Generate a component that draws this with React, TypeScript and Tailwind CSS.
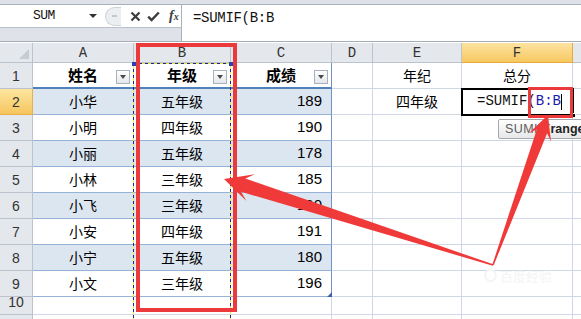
import React from 'react';

// column widths: row header, A..F, G (rest)
const COLS = ['w-[33px]', 'w-[101px]', 'w-[97px]', 'w-[101px]', 'w-[41px]', 'w-[89px]', 'w-[111px]', 'flex-1'];

const students = [
  ['小华', '五年级', '189'],
  ['小明', '四年级', '190'],
  ['小丽', '五年级', '178'],
  ['小林', '三年级', '185'],
  ['小飞', '三年级', '190'],
  ['小安', '四年级', '191'],
  ['小宁', '五年级', '180'],
  ['小文', '三年级', '196'],
];

const cjk = "font-['Noto_Sans_CJK_SC',sans-serif]";
const mono = "font-['Liberation_Mono',monospace]";
const sans = "font-['Liberation_Sans',sans-serif]";

// tapered arrow like the ones drawn on screenshots
function arrowPoints(tip: [number, number], tail: [number, number], headLen: number, headHalf: number, neckHalf: number) {
  const dx = tail[0] - tip[0];
  const dy = tail[1] - tip[1];
  const len = Math.hypot(dx, dy);
  const ux = dx / len;
  const uy = dy / len;
  const nx = -uy;
  const ny = ux;
  const p = (a: number, b: number) => `${(tip[0] + ux * a + nx * b).toFixed(1)},${(tip[1] + uy * a + ny * b).toFixed(1)}`;
  return [
    p(0, 0),
    p(headLen, headHalf),
    p(headLen * 0.72, neckHalf),
    p(len, 0.7),
    p(len, -0.7),
    p(headLen * 0.72, -neckHalf),
    p(headLen, -headHalf),
  ].join(' ');
}

function FilterBtn() {
  return (
    <div className="absolute right-[3px] bottom-[3px] w-[14px] h-[14px] flex items-center justify-center border border-[#a8b2be] bg-linear-to-b from-white to-[#e3e7ec]">
      <div className="w-0 h-0 border-l-[3px] border-r-[3px] border-t-[4px] border-l-transparent border-r-transparent border-t-[#4a4a4a]" />
    </div>
  );
}

function RowHead({ n, active = false, h = 'h-[26px]' }: { n: string; active?: boolean; h?: string }) {
  return (
    <div
      className={`${COLS[0]} ${h} shrink-0 flex items-end justify-center pb-[1px] border-r border-b text-[14px] text-[#333] ${sans} ${
        active ? 'bg-linear-to-b from-[#fde6a0] to-[#f5c55c] border-[#e9b04a]' : 'bg-[#e4e7ec] border-[#bcc3cc]'
      }`}
    >
      {n}
    </div>
  );
}

export default function App() {
  return (
    <div className="relative w-[581px] h-[319px] overflow-hidden bg-white select-none">
      {/* 수식 입력줄 */}
      <div className="h-[5px] bg-[#dfe3e9] border-b border-[#a9b1bb]" />
      <div className="flex h-[36px]">
        <div className="w-[182px] shrink-0 flex flex-col border-r border-[#a9b1bb]">
          <div className="h-[23px] flex items-center bg-white border-b border-[#b9c0c9]">
            <div className="w-[100px] h-full flex items-center">
              <span className={`pl-[33px] text-[13px] tracking-[-0.5px] text-[#111] ${mono}`}>SUM</span>
              <div className="ml-auto mr-[3px] w-0 h-0 border-l-[4px] border-r-[4px] border-t-[4px] border-l-transparent border-r-transparent border-t-[#333]" />
            </div>
            <div className="ml-[5px] w-[16px] h-[19px] rounded-l-full bg-[#eceef1] border border-r-0 border-[#cfd4da] flex items-center justify-center">
              <div className="w-[5px] h-[2px] bg-[#c3c8cf] ml-[2px]" />
            </div>
            <svg className="ml-[9px]" width="11" height="11" viewBox="0 0 11 11">
              <path d="M1.5 1.5 L9.5 9.5 M9.5 1.5 L1.5 9.5" stroke="#3d3d3d" strokeWidth="2.2" />
            </svg>
            <svg className="ml-[6px]" width="13" height="11" viewBox="0 0 13 11">
              <path d="M1.2 5.6 L4.6 9 L11.8 1.5" stroke="#3d3d3d" strokeWidth="2.4" fill="none" />
            </svg>
            <span className="ml-[9px] text-[14px] italic font-bold text-[#3d3d3d] font-['Liberation_Serif',serif] leading-none">
              f<span className="text-[10px]">x</span>
            </span>
          </div>
          <div className="flex-1 bg-[#dfe3e9]" />
        </div>
        <div className={`flex-1 bg-white pl-[11px] pt-[3px] text-[14px] tracking-[-0.3px] text-[#111] ${mono}`}>=SUMIF(B:B</div>
      </div>
      <div className="h-[2px] border-t border-[#a4acb6] bg-white" />

      {/* 열 머리글 */}
      <div className="flex h-[20px]">
        <div className={`${COLS[0]} shrink-0 flex items-end justify-end p-[3px] bg-[#e4e7ec] border-r border-b border-[#bcc3cc]`}>
          <div className="w-0 h-0 border-l-[10px] border-l-transparent border-b-[10px] border-b-[#c6cbd2]" />
        </div>
        {['A', 'B', 'C', 'D', 'E'].map((c, i) => (
          <div
            key={c}
            className={`${COLS[i + 1]} shrink-0 flex items-end justify-center border-r border-b border-[#bcc3cc] bg-[#e4e7ec] text-[14px] text-[#333] leading-[17px] ${mono}`}
          >
            {c}
          </div>
        ))}
        <div className={`${COLS[6]} shrink-0 flex items-end justify-center border-r border-b border-[#e9a941] bg-linear-to-b from-[#fde3a0] to-[#f7c85f] text-[14px] text-[#333] leading-[17px] ${mono}`}>
          F
        </div>
        <div className="flex-1 bg-[#e4e7ec] border-b border-[#bcc3cc]" />
      </div>

      {/* 1행 */}
      <div className={`flex h-[26px] ${cjk}`}>
        <RowHead n="1" />
        <div className={`${COLS[1]} shrink-0 relative flex items-center justify-center border-b-2 border-b-[#4f81bd] border-r border-r-[#d0d7e5] text-[15px] font-bold`}>
          姓名
          <FilterBtn />
        </div>
        <div className={`${COLS[2]} shrink-0 relative flex items-center justify-center border-b-2 border-b-[#4f81bd] border-r border-r-[#d0d7e5] text-[15px] font-bold`}>
          年级
          <FilterBtn />
        </div>
        <div className={`${COLS[3]} shrink-0 relative flex items-center justify-center border-b-2 border-b-[#4f81bd] border-r border-r-[#7391c4] text-[15px] font-bold`}>
          成绩
          <FilterBtn />
        </div>
        <div className={`${COLS[4]} shrink-0 border-r border-b border-[#d0d7e5]`} />
        <div className={`${COLS[5]} shrink-0 flex items-center justify-center border-r border-b border-[#d0d7e5] text-[14px]`}>年纪</div>
        <div className={`${COLS[6]} shrink-0 flex items-center justify-center border-r border-b border-[#d0d7e5] text-[14px]`}>总分</div>
        <div className="flex-1 border-b border-[#d0d7e5]" />
      </div>

      {/* 2~9행 */}
      {students.map(([name, grade, score], i) => {
        const band = i % 2 === 0;
        const fill = band ? 'bg-[#dce6f1] border-r-[#dce6f1]' : 'bg-white border-r-[#d0d7e5]';
        return (
          <div key={name} className={`flex h-[26px] ${cjk}`}>
            <RowHead n={String(i + 2)} active={i === 0} />
            <div className={`${COLS[1]} shrink-0 flex items-center justify-center border-r border-b border-b-[#95b3d7] ${fill} text-[14px]`}>{name}</div>
            <div className={`${COLS[2]} shrink-0 flex items-center justify-center border-r border-b border-b-[#95b3d7] ${fill} text-[14px]`}>{grade}</div>
            <div
              className={`${COLS[3]} shrink-0 flex items-center justify-end pr-[9px] border-r border-r-[#7391c4] border-b border-b-[#95b3d7] ${
                band ? 'bg-[#dce6f1]' : 'bg-white'
              } text-[15px] ${sans}`}
            >
              {score}
            </div>
            <div className={`${COLS[4]} shrink-0 border-r border-b border-[#d0d7e5]`} />
            <div className={`${COLS[5]} shrink-0 flex items-center justify-center border-r border-b border-[#d0d7e5] text-[14px]`}>
              {i === 0 ? '四年级' : ''}
            </div>
            <div className={`${COLS[6]} shrink-0 flex items-center pl-[15px] border-r border-b border-[#d0d7e5] text-[14px] ${mono}`}>
              {i === 0 && (
                <>
                  <span className="text-[#111]">=SUMIF(</span>
                  <span className="text-[#1a1ab0]">B:B</span>
                  <span className="w-[1px] h-[16px] bg-black" />
                </>
              )}
            </div>
            <div className="flex-1 border-b border-[#d0d7e5]" />
          </div>
        );
      })}

      {/* 10, 11행 */}
      <div className="flex h-[18px]">
        <RowHead n="10" h="h-[18px]" />
        {[1, 2, 3, 4, 5, 6].map((c) => (
          <div key={c} className={`${COLS[c]} shrink-0 border-r border-b border-[#d0d7e5]`} />
        ))}
        <div className="flex-1 border-b border-[#d0d7e5]" />
      </div>
      <div className="flex h-[10px]">
        <RowHead n="" h="h-[10px]" />
        {[1, 2, 3, 4, 5, 6].map((c) => (
          <div key={c} className={`${COLS[c]} shrink-0 border-r border-[#d0d7e5]`} />
        ))}
      </div>

      {/* 표 크기 조절 핸들 */}
      <div className="absolute left-[327px] top-[292px] w-0 h-0 border-l-[5px] border-l-transparent border-b-[5px] border-b-[#3f5fa8]" />

      {/* B열 복사 범위 점선 */}
      <div className="absolute left-[133px] top-[63px] w-[99px] h-[1px] bg-[repeating-linear-gradient(to_right,#1b2a86_0_3px,#efe64a_3px_6px)]" />
      <div className="absolute left-[133px] top-[63px] w-[1px] h-[260px] bg-[repeating-linear-gradient(to_bottom,#1b2a86_0_3px,#efe64a_3px_6px)]" />
      <div className="absolute left-[230px] top-[63px] w-[1px] h-[260px] bg-[repeating-linear-gradient(to_bottom,#1b2a86_0_3px,#efe64a_3px_6px)]" />
      <div className="absolute left-[132px] top-[62px] w-[4px] h-[4px] bg-[#2342b5]" />
      <div className="absolute left-[229px] top-[62px] w-[4px] h-[4px] bg-[#2342b5]" />

      {/* 선택된 셀 F2 */}
      <div className="absolute left-[461px] top-[88px] w-[113px] h-[28px] border-2 border-black" />
      <div className="absolute left-[571px] top-[113px] w-[5px] h-[5px] bg-black border border-white" />

      {/* 함수 도움말 */}
      <div className={`absolute left-[498px] top-[119px] h-[20px] flex items-center pl-[6px] pr-[6px] whitespace-nowrap rounded-[2px] border border-[#a5a9ae] bg-linear-to-b from-white to-[#e6e7e9] text-[12.5px] tracking-[0.4px] text-[#5c5c5c] ${sans}`}>
        SUMIF(<b className="text-[#222] tracking-normal">range</b>, criteria, [sum_range])
      </div>

      {/* 희미한 워터마크 */}
      <div className={`absolute left-[484px] top-[266px] flex items-center gap-[3px] text-[13px] text-[#f4f4f4] ${cjk}`}>
        <div className="w-[13px] h-[13px] rounded-full border-2 border-[#f4f4f4]" />
        百度经验
      </div>

      {/* 빨간 강조 상자 */}
      <div className="absolute left-[136px] top-[43px] w-[101px] h-[269px] border-4 border-[#ec3a3c]" />
      <div className="absolute left-[528px] top-[87px] w-[45px] h-[31px] border-[3px] border-[#ec3a3c]" />

      {/* 빨간 화살표 */}
      <svg className="absolute left-0 top-0" width="581" height="319" viewBox="0 0 581 319">
        <polygon points={arrowPoints([224, 179], [493, 265], 28, 14, 7)} fill="#f03a3a" />
        <polygon points={arrowPoints([548, 115], [493, 265], 24, 12, 5.5)} fill="#f03a3a" />
      </svg>
    </div>
  );
}
